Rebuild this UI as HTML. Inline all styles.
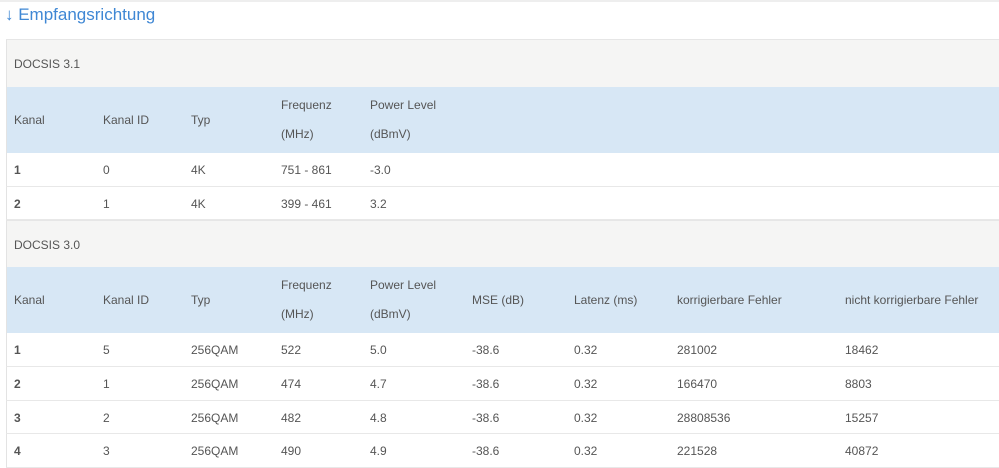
<!DOCTYPE html>
<html><head><meta charset="utf-8"><style>
body{margin:0;width:999px;height:460px;overflow:hidden;background:#fff;font-family:"Liberation Sans",sans-serif;font-size:12px;color:#555;position:relative}
.topline{position:absolute;left:0;top:0;width:999px;height:2px;background:#eee}
.title{position:absolute;left:5px;top:5px;font-size:17px;color:#3f87d4}
.r{position:absolute;left:6px;width:993px;border-left:1px solid #e3e3e3;box-sizing:border-box}
.g{background:#f5f5f4;border-top:1px solid #e6e6e6}
.b{background:#d7e7f5}
.w{background:#fff;border-bottom:1px solid #e8e8e8}
.t{position:absolute;white-space:nowrap}
</style></head><body>
<div class="topline"></div>
<div class="title">↓ Empfangsrichtung</div>

<div class="r g" style="top:39px;height:48px"><span class="t" style="left:7px;top:17px">DOCSIS 3.1</span></div>
<div class="r b" style="top:87px;height:66px">
<span class="t" style="left:7px;top:26px">Kanal</span><span class="t" style="left:96px;top:26px">Kanal ID</span><span class="t" style="left:184px;top:26px">Typ</span>
<span class="t" style="left:274px;top:11px">Frequenz</span><span class="t" style="left:274px;top:40px">(MHz)</span>
<span class="t" style="left:363px;top:11px">Power Level</span><span class="t" style="left:363px;top:40px">(dBmV)</span></div>
<div class="r w" style="top:153px;height:34px"><b class="t" style="left:7px;top:10px">1</b><span class="t" style="left:96px;top:10px">0</span><span class="t" style="left:184px;top:10px">4K</span><span class="t" style="left:274px;top:10px">751 - 861</span><span class="t" style="left:363px;top:10px">-3.0</span></div>
<div class="r w" style="top:187px;height:33px"><b class="t" style="left:7px;top:10px">2</b><span class="t" style="left:96px;top:10px">1</span><span class="t" style="left:184px;top:10px">4K</span><span class="t" style="left:274px;top:10px">399 - 461</span><span class="t" style="left:363px;top:10px">3.2</span></div>

<div class="r g" style="top:220px;height:47px"><span class="t" style="left:7px;top:17px">DOCSIS 3.0</span></div>
<div class="r b" style="top:267px;height:66px">
<span class="t" style="left:7px;top:26px">Kanal</span><span class="t" style="left:96px;top:26px">Kanal ID</span><span class="t" style="left:184px;top:26px">Typ</span>
<span class="t" style="left:274px;top:11px">Frequenz</span><span class="t" style="left:274px;top:40px">(MHz)</span>
<span class="t" style="left:363px;top:11px">Power Level</span><span class="t" style="left:363px;top:40px">(dBmV)</span>
<span class="t" style="left:465px;top:26px">MSE (dB)</span><span class="t" style="left:567px;top:26px">Latenz (ms)</span><span class="t" style="left:670px;top:26px">korrigierbare Fehler</span><span class="t" style="left:838px;top:26px">nicht korrigierbare Fehler</span></div>
<div class="r w" style="top:333px;height:34px"><b class="t" style="left:7px;top:10px">1</b><span class="t" style="left:96px;top:10px">5</span><span class="t" style="left:184px;top:10px">256QAM</span><span class="t" style="left:274px;top:10px">522</span><span class="t" style="left:363px;top:10px">5.0</span><span class="t" style="left:465px;top:10px">-38.6</span><span class="t" style="left:567px;top:10px">0.32</span><span class="t" style="left:670px;top:10px">281002</span><span class="t" style="left:838px;top:10px">18462</span></div>
<div class="r w" style="top:367px;height:34px"><b class="t" style="left:7px;top:10px">2</b><span class="t" style="left:96px;top:10px">1</span><span class="t" style="left:184px;top:10px">256QAM</span><span class="t" style="left:274px;top:10px">474</span><span class="t" style="left:363px;top:10px">4.7</span><span class="t" style="left:465px;top:10px">-38.6</span><span class="t" style="left:567px;top:10px">0.32</span><span class="t" style="left:670px;top:10px">166470</span><span class="t" style="left:838px;top:10px">8803</span></div>
<div class="r w" style="top:401px;height:33px"><b class="t" style="left:7px;top:10px">3</b><span class="t" style="left:96px;top:10px">2</span><span class="t" style="left:184px;top:10px">256QAM</span><span class="t" style="left:274px;top:10px">482</span><span class="t" style="left:363px;top:10px">4.8</span><span class="t" style="left:465px;top:10px">-38.6</span><span class="t" style="left:567px;top:10px">0.32</span><span class="t" style="left:670px;top:10px">28808536</span><span class="t" style="left:838px;top:10px">15257</span></div>
<div class="r w" style="top:434px;height:34px"><b class="t" style="left:7px;top:10px">4</b><span class="t" style="left:96px;top:10px">3</span><span class="t" style="left:184px;top:10px">256QAM</span><span class="t" style="left:274px;top:10px">490</span><span class="t" style="left:363px;top:10px">4.9</span><span class="t" style="left:465px;top:10px">-38.6</span><span class="t" style="left:567px;top:10px">0.32</span><span class="t" style="left:670px;top:10px">221528</span><span class="t" style="left:838px;top:10px">40872</span></div>
</body></html>
